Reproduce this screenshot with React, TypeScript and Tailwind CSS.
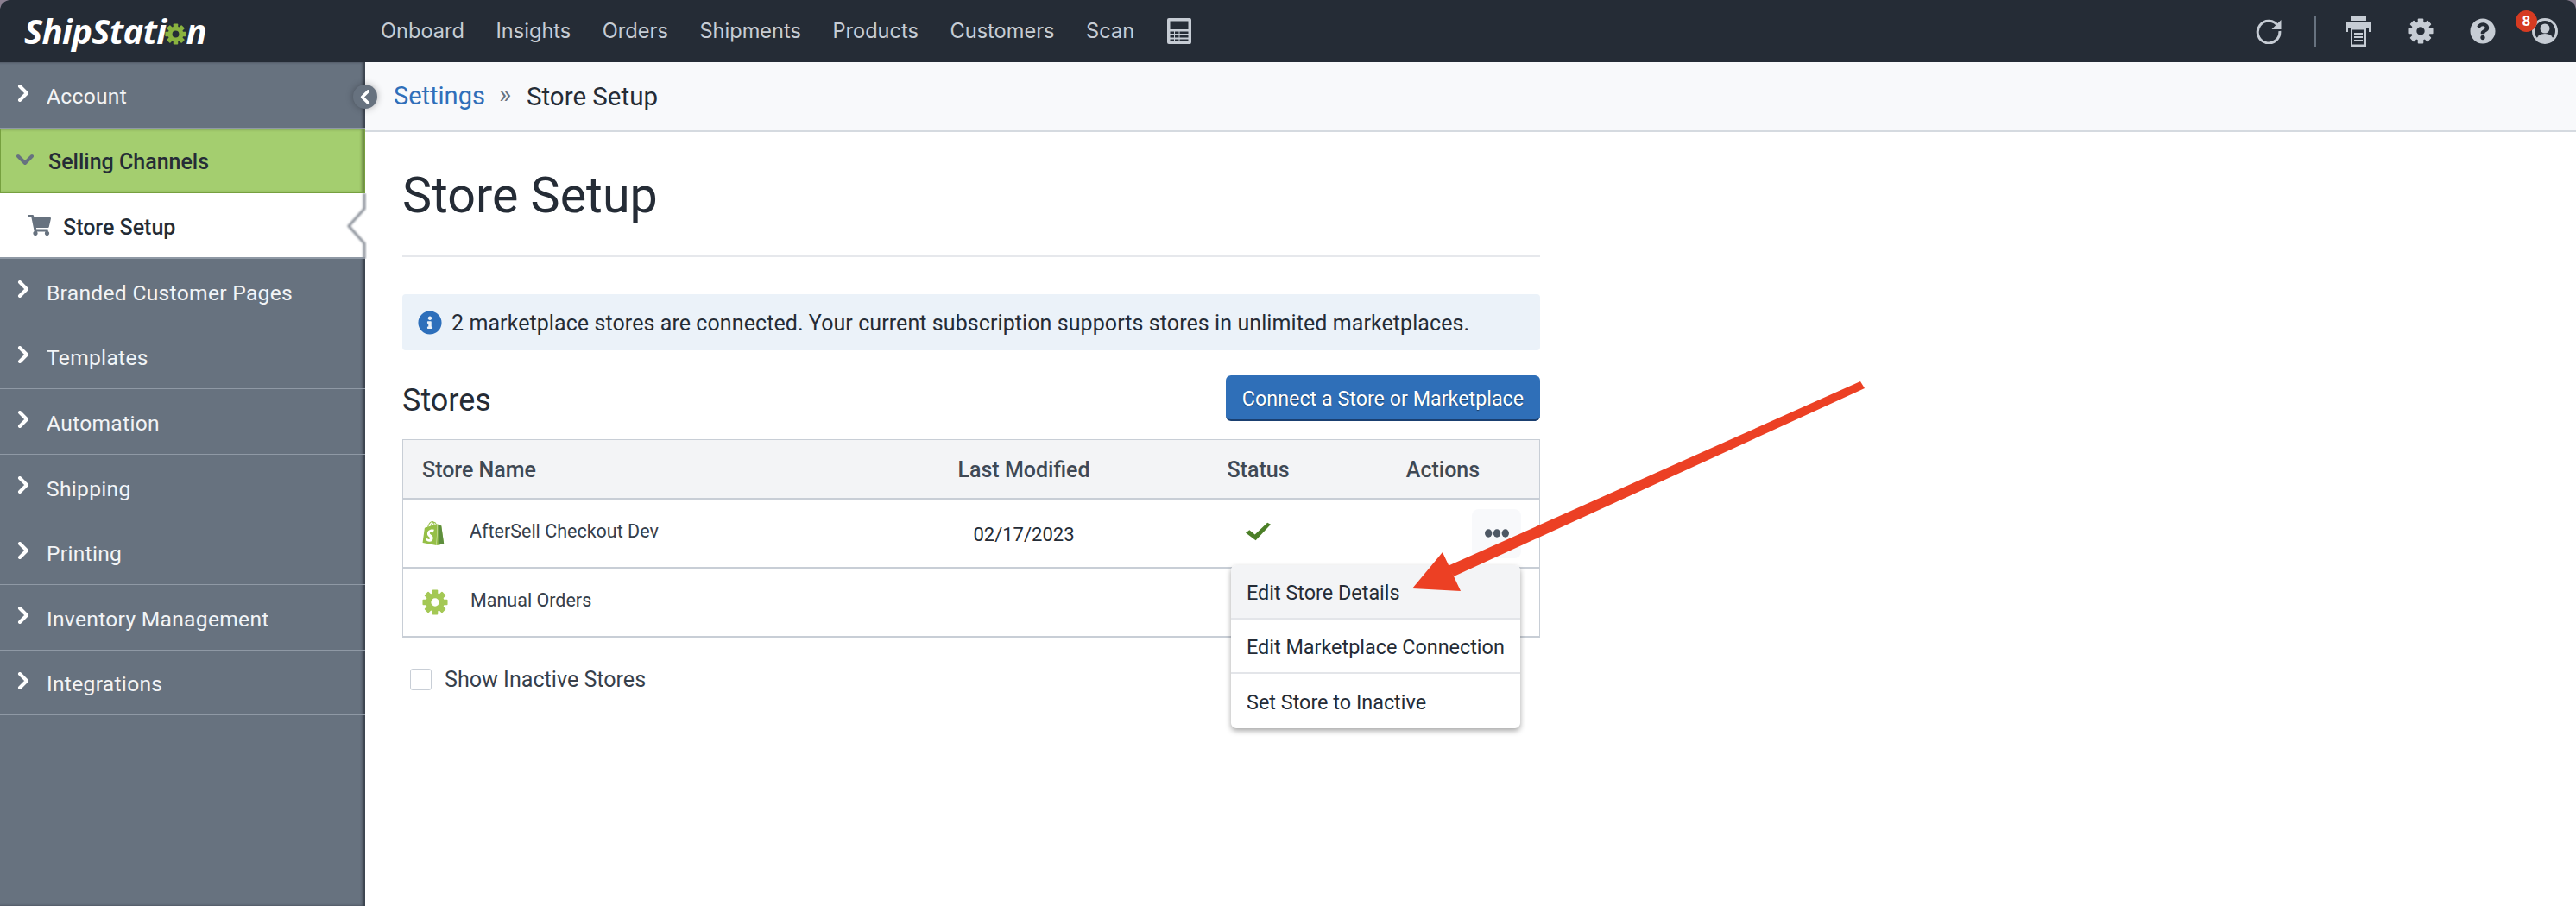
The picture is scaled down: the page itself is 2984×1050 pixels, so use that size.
import React from "react";
import { FaShoppingCart, FaQuestionCircle, FaInfoCircle } from "react-icons/fa";
import { SiShopify } from "react-icons/si";

const Gear = ({ className }: { className?: string }) => (
  <svg viewBox="0 0 32 32" className={className} fill="currentColor">
    {[0, 45, 90, 135, 180, 225, 270, 315].map((a) => (
      <rect key={a} x="12.5" y="0.5" width="7" height="8" rx="1" transform={`rotate(${a} 16 16)`} />
    ))}
    <path fillRule="evenodd" d="M16 4.5a11.500 11.500 0 1 0 0 23a11.500 11.500 0 1 0 0-23zM16 11a5 5 0 1 1 0 10a5 5 0 1 1 0-10z" />
  </svg>
);

const Chevron = ({ dir = "right", className }: { dir?: "right" | "down" | "left"; className?: string }) => {
  const pts = dir === "right" ? "3,2 11,10 3,18" : dir === "left" ? "11,2 3,10 11,18" : "2,3 10,11 18,3";
  const vb = dir === "down" ? "0 0 20 14" : "0 0 14 20";
  return (
    <svg viewBox={vb} className={className} fill="none" stroke="currentColor" strokeWidth="4" strokeLinecap="round" strokeLinejoin="round">
      <polyline points={pts} />
    </svg>
  );
};

const Refresh = () => (
  <svg viewBox="0 0 30 30" className="w-[30px] h-[30px]" fill="none">
    <path d="M26 9.500A12.800 12.800 0 1 0 27.800 15" stroke="#c6ccd4" strokeWidth="3" />
    <path d="M29.500 2v11H18.500z" fill="#c6ccd4" />
  </svg>
);

const Printer = () => (
  <svg viewBox="0 0 30 36" className="w-[30px] h-[36px]" fill="#c6ccd4">
    <path d="M6 0h18v6H6z" />
    <path d="M0 7h30v12h-3v-5H3v5H0z" />
    <path fillRule="evenodd" d="M6 14h18v22H6zM8 16.500v17h14v-17z" />
    <path d="M10 20h10v2H10zM10 24h10v2H10zM10 28h10v2H10z" />
  </svg>
);

const Calculator = () => (
  <svg viewBox="0 0 28 30" className="w-[28px] h-[30px]">
    <rect width="28" height="30" rx="2" fill="#c6ccd4" />
    <rect x="3.500" y="3.500" width="21" height="9.500" fill="#252c36" />
    {[15.500, 20, 24.500].map((y) =>
      [3.500, 9, 14.500, 20].map((x) => <rect key={`${x}-${y}`} x={x} y={y} width="4.500" height="2.500" fill="#252c36" />)
    )}
  </svg>
);

const UserCircle = () => (
  <svg viewBox="0 0 30 30" className="w-[30px] h-[30px]">
    <defs>
      <clipPath id="uc"><circle cx="15" cy="15" r="13" /></clipPath>
    </defs>
    <circle cx="15" cy="15" r="13.500" fill="none" stroke="#c6ccd4" strokeWidth="3" />
    <g clipPath="url(#uc)" fill="#c6ccd4">
      <circle cx="15" cy="12" r="5.500" />
      <ellipse cx="15" cy="26" rx="10" ry="8" />
    </g>
  </svg>
);

const Check = () => (
  <svg viewBox="0 0 30 32" preserveAspectRatio="none" className="w-[29px] h-[22px] -mt-[4px] text-[#4b7f27]" fill="currentColor">
    <path d="M0 18l4.500-4.500L11 21 26 1l4 3-18 27z" />
  </svg>
);

const Dots = () => (
  <svg viewBox="0 0 30 10" className="w-[28px] h-[10px] text-[#4e5864]" fill="currentColor">
    <ellipse cx="4.500" cy="5" rx="4.500" ry="5" />
    <ellipse cx="15" cy="5" rx="4.500" ry="5" />
    <ellipse cx="25.500" cy="5" rx="4.500" ry="5" />
  </svg>
);

const navItems = ["Onboard", "Insights", "Orders", "Shipments", "Products", "Customers", "Scan"];
const lower = ["Branded Customer Pages", "Templates", "Automation", "Shipping", "Printing", "Inventory Management", "Integrations"];

function SideRow({ label }: { label: string }) {
  return (
    <div className="h-[75.6px] flex items-center pl-[20px] border-b border-[#8f99a5] text-white">
      <Chevron className="w-[14px] h-[20px] text-white mr-[20px] -mt-[4px]" />
      <span className="text-[24.600px] tracking-[0.3px] text-[#f2f4f6] pt-[6px]">{label}</span>
    </div>
  );
}

export default function App() {
  return (
    <div className="relative h-[1050px] w-[2984px] overflow-hidden bg-white text-[#252c36] font-['Roboto',sans-serif]">
      <div className="bg-[#8a7f90]">
        <header className="h-[72px] bg-[#252c36] rounded-t-[12px] flex items-center">
          <div className="w-[441px] pl-[28px] flex items-center text-white font-['Open_Sans',sans-serif] italic font-bold text-[40px] tracking-[-0.7px] leading-none shrink-0">
            <span>ShipStati</span>
            <Gear className="w-[25px] h-[25px] text-[#8ab33f] mt-[7px] -ml-[1px] mr-[-1px]" />
            <span>n</span>
          </div>
          <nav className="flex items-center gap-[36.500px] text-[23.600px] text-[#c6ccd4] font-['Inter',sans-serif]">
            {navItems.map((n) => (
              <span key={n}>{n}</span>
            ))}
            <span className="ml-[1px]"><Calculator /></span>
          </nav>
          <div className="ml-auto pr-[21px] flex items-center">
            <Refresh />
            <div className="w-[2px] h-[36px] bg-[#67727f] ml-[38px] mr-[34px]" />
            <Printer />
            <Gear className="w-[30px] h-[30px] text-[#c6ccd4] ml-[42px]" />
            <FaQuestionCircle className="w-[30px] h-[30px] text-[#c6ccd4] ml-[42px]" />
            <div className="relative ml-[42px]">
              <UserCircle />
              <span className="absolute top-[-9px] left-[-19px] w-[25px] h-[25px] rounded-full bg-[#d63b22] text-white text-[17px] font-bold flex items-center justify-center">8</span>
            </div>
          </div>
        </header>
      </div>

      <div className="flex h-[978px]">
        <aside className="relative w-[423px] shrink-0 bg-[#67727f] shadow-[inset_-3px_0_3px_rgba(30,35,45,0.6)]">
          <div className="h-[77px] flex items-center pl-[20px] border-b border-[#8f99a5] text-white">
            <Chevron className="w-[14px] h-[20px] mr-[20px] -mt-[4px]" />
            <span className="text-[24.600px] tracking-[0.3px] text-[#f2f4f6] pt-[5px]">Account</span>
          </div>
          <div className="h-[75px] flex items-center pl-[18px] bg-[#a4ce6f] border border-[#76a03f] shadow-[inset_-3px_0_3px_rgba(60,80,30,0.5)]">
            <Chevron dir="down" className="w-[20px] h-[14px] text-[#67727f] mr-[17px] -mt-[3px]" />
            <span className="text-[25px] font-medium text-[#252c36] pt-[3px]">Selling Channels</span>
          </div>
          <div className="h-[76px] flex items-center pl-[32px] bg-white border-b-2 border-[#8f99a5]">
            <FaShoppingCart className="w-[27px] h-[24px] text-[#67727f] mr-[14px]" />
            <span className="text-[25px] font-medium text-[#252c36] pt-[5px]">Store Setup</span>
          </div>
          {lower.map((l) => (
            <SideRow key={l} label={l} />
          ))}
        </aside>

        <main className="flex-1 min-w-0">
          <div className="h-[81px] bg-[#f8f9fb] border-b-2 border-[#d5dae0] flex items-center pl-[33px] text-[29px]">
            <span className="text-[#2f6fba] pt-[1px]">Settings</span>
            <span className="mx-[16px] text-[#67727f] text-[30px] -mt-[6px]">»</span>
            <span className="text-[#252c36] text-[29.500px] pt-[1px] ml-[2px]">Store Setup</span>
          </div>
          <div className="w-[1361px] pl-[43px]">
            <h1 className="h-[145px] border-b-2 border-[#e6e8ec] flex items-center text-[57.400px] font-normal leading-none text-[#252c36] pt-[4px]">Store Setup</h1>
            <div className="mt-[43px] h-[65px] bg-[#ebf2f9] rounded-[4px] flex items-center pl-[18px]">
              <FaInfoCircle className="w-[28px] h-[28px] text-[#2d6fbb] mr-[11px]" />
              <span className="text-[25px] tracking-[0.08px] pt-[2px]">2 marketplace stores are connected. Your current subscription supports stores in unlimited marketplaces.</span>
            </div>
            <div className="mt-[29px] h-[53px] flex items-center justify-between">
              <h2 className="text-[36px] font-normal pt-[5px]">Stores</h2>
              <button className="w-[364px] h-[53px] rounded-[6px] bg-[#2f6fb8] border-b-2 border-[#1a3f70] text-white text-[23.300px] pt-[4px] [text-shadow:0_1px_1px_rgba(0,0,0,0.5)]">Connect a Store or Marketplace</button>
            </div>
            <div className="mt-[21px] border border-b-2 border-[#c8ced6]">
              <div className="h-[69px] bg-[#f3f4f6] border-b-2 border-[#c8ced6] grid grid-cols-[533px_372px_170px_1fr] items-center text-[25px] font-medium text-[#3f4955] pt-[2px]">
                <span className="pl-[22px]">Store Name</span>
                <span className="text-center">Last Modified</span>
                <span className="text-center pl-[1px]">Status</span>
                <span className="text-center pl-[18px]">Actions</span>
              </div>
              <div className="h-[80px] border-b-2 border-[#c8ced6] grid grid-cols-[533px_372px_170px_1fr] items-center">
                <div className="flex items-center pl-[22px]">
                  <span className="relative w-[28px] h-[30px] -ml-[1px]">
                    <SiShopify className="absolute inset-0 w-[28px] h-[30px] text-[#95bf47]" />
                    <SiShopify className="absolute inset-0 w-[28px] h-[30px] text-[#5e8e3e] [clip-path:inset(0_0_0_70%)]" />
                  </span>
                  <span className="ml-[28px] text-[21.500px] -mt-[4px] text-[#36404b]">AfterSell Checkout Dev</span>
                </div>
                <span className="text-center text-[22px] pt-[2px]">02/17/2023</span>
                <div className="flex justify-center"><Check /></div>
                <div className="flex justify-end pr-[21px]">
                  <div className="w-[57px] h-[57px] rounded-[8px] bg-[#f8f9fb] flex items-center justify-center">
                    <Dots />
                  </div>
                </div>
              </div>
              <div className="h-[78px] flex items-center pl-[22px]">
                <Gear className="w-[30px] h-[30px] text-[#a4c855]" />
                <span className="ml-[26px] text-[21.500px] -mt-[4px] text-[#36404b]">Manual Orders</span>
              </div>
            </div>
            <label className="mt-[30px] ml-[9px] flex items-center">
              <span className="w-[25px] h-[25px] rounded-[3px] border border-[#c8ced6] bg-white" />
              <span className="ml-[15px] text-[25.100px] text-[#36404b]">Show Inactive Stores</span>
            </label>
          </div>
        </main>
      </div>

      {/* collapse handle */}
      <div className="absolute left-[409px] top-[98px] w-[28px] h-[28px] rounded-full bg-[#67727f] flex items-center justify-center shadow-[0_0_8px_rgba(0,0,0,0.3)]">
        <Chevron dir="left" className="w-[12px] h-[17px] text-white" />
      </div>

      {/* active notch shadow */}
      <svg className="absolute left-[395px] top-[224px] pointer-events-none" width="30" height="76" viewBox="0 0 30 76">
        <defs>
          <filter id="nb" x="-50%" y="-10%" width="200%" height="120%"><feGaussianBlur stdDeviation="1" /></filter>
        </defs>
        <polyline points="27,0 27,18 9,38 27,58 27,76" fill="none" stroke="#8a9099" strokeWidth="3" filter="url(#nb)" />
      </svg>

      {/* dropdown */}
      <div className="absolute left-[1426px] top-[655px] w-[335px] h-[189px] bg-white rounded-[6px] shadow-[0_3px_6px_rgba(0,0,0,0.35)] text-[23.400px] text-[#252c36] flex flex-col overflow-hidden">
        <div className="h-[63px] flex items-center pl-[18px] pt-[5px] bg-[#f3f4f6] border-b-2 border-[#e3e5e9]">Edit Store Details</div>
        <div className="h-[63px] flex items-center pl-[18px] pt-[5px] border-b-2 border-[#e3e5e9]">Edit Marketplace Connection</div>
        <div className="h-[63px] flex items-center pl-[18px] pt-[5px]">Set Store to Inactive</div>
      </div>

      {/* annotation arrow */}
      <svg className="absolute left-0 top-0 pointer-events-none" width="2984" height="1050">
        <polygon points="2155,442 2160,450 1684,668 1677,656" fill="#ec4024" />
        <polygon points="1671,640 1636,682 1692,685" fill="#ec4024" />
      </svg>
    </div>
  );
}
